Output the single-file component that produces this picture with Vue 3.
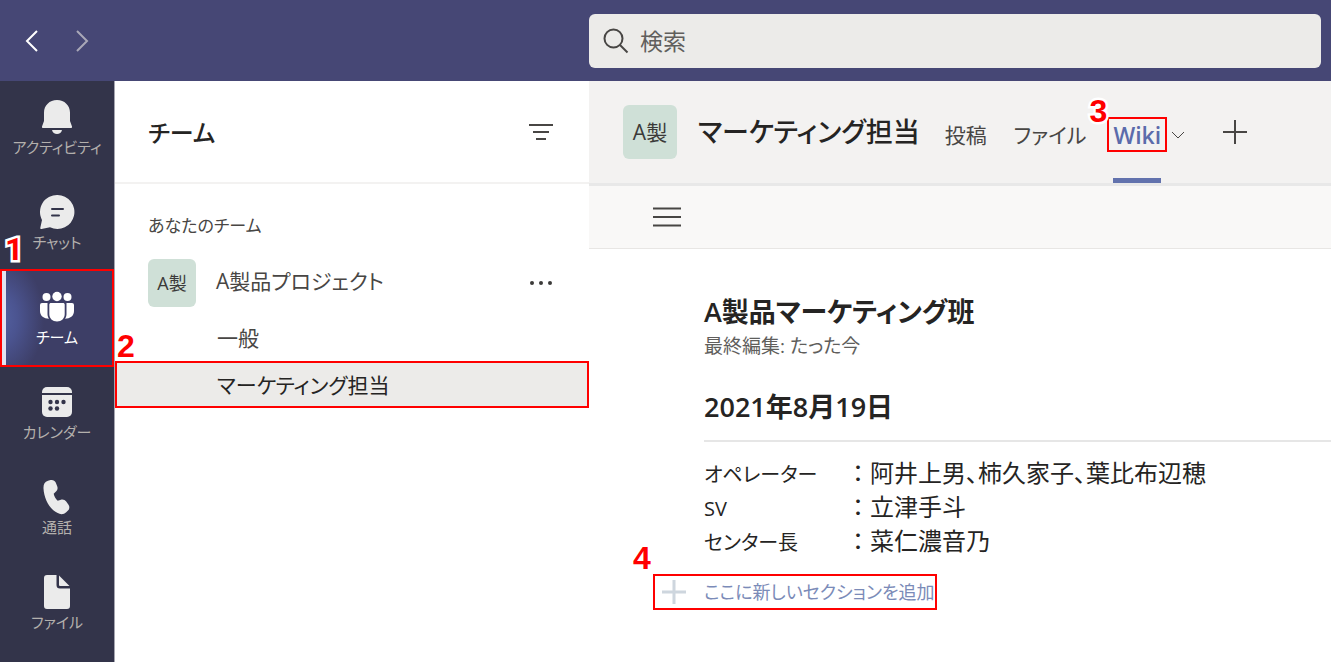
<script setup>
import { ref } from 'vue'

const query = ref('')

const railItems = [
  { id: 'activity', label: 'アクティビティ' },
  { id: 'chat', label: 'チャット' },
  { id: 'teams', label: 'チーム', active: true },
  { id: 'calendar', label: 'カレンダー' },
  { id: 'calls', label: '通話' },
  { id: 'files', label: 'ファイル' },
]

const members = [
  { role: 'オペレーター', names: '阿井上男、柿久家子、葉比布辺穂' },
  { role: 'SV', names: '立津手斗' },
  { role: 'センター長', names: '菜仁濃音乃' },
]
</script>

<template>
  <div class="app">
    <header class="topbar">
      <nav class="history" aria-label="履歴">
        <button class="history-btn" type="button" aria-label="戻る">
          <svg width="14" height="22" viewBox="0 0 14 22"><path d="M12 1 2 11l10 10" /></svg>
        </button>
        <button class="history-btn dim" type="button" aria-label="進む">
          <svg width="14" height="22" viewBox="0 0 14 22"><path d="M2 1l10 10L2 21" /></svg>
        </button>
      </nav>
      <label class="search">
        <svg width="26" height="26" viewBox="0 0 26 26" aria-hidden="true">
          <circle cx="10.500" cy="10.500" r="9" />
          <path d="M17 17l7.500 7.500" />
        </svg>
        <input v-model="query" type="search" placeholder="検索" aria-label="検索" />
      </label>
    </header>

    <div class="body">
      <nav class="rail" aria-label="アプリ">
        <a
          v-for="item in railItems"
          :key="item.id"
          href="#"
          class="rail-item"
          :class="{ active: item.active }"
        >
          <svg class="rail-icon" width="36" height="36" viewBox="0 0 36 36" aria-hidden="true">
            <template v-if="item.id === 'activity'">
              <path d="M18 1C10.500 1 5 6.500 5 13.500V22l-2 5.500c-.2.800.2 1.500 1 1.500h28c.8 0 1.200-.700 1-1.500L31 22v-8.500C31 6.500 25.500 1 18 1z" />
              <path d="M13 31h10c-.5 2.500-2.500 4-5 4s-4.500-1.500-5-4z" />
            </template>
            <template v-else-if="item.id === 'chat'">
              <path d="M18.500 1a17 17 0 1 1-7.500 32.300L2.500 35c-.8.200-1.400-.5-1.200-1.300L3 26A17 17 0 0 1 18.500 1z" />
              <path class="cut" d="M13 15h11M13 21.500h7" />
            </template>
            <template v-else-if="item.id === 'teams'">
              <circle cx="7.500" cy="8" r="4" />
              <circle cx="28.500" cy="8" r="4" />
              <circle cx="18" cy="7.500" r="4.700" />
              <path d="M3 14h5.500v11c0 1.800.5 3.300 1.500 4.700C5 29.700 1 27 1 22v-6a2 2 0 0 1 2-2z" />
              <path d="M33 14h-5.500v11c0 1.800-.5 3.300-1.500 4.700 5 0 9-2.700 9-7.700v-6a2 2 0 0 0-2-2z" />
              <path d="M12 14h12c1 0 1.700.7 1.700 1.700V25c0 4.500-3.200 7.500-7.700 7.500S10.300 29.500 10.300 25v-9.300c0-1 .7-1.700 1.700-1.700z" />
            </template>
            <template v-else-if="item.id === 'calendar'">
              <path d="M8 3h20a5 5 0 0 1 5 5v1H3V8a5 5 0 0 1 5-5z" />
              <path d="M3 11h30v17a5 5 0 0 1-5 5H8a5 5 0 0 1-5-5z" />
              <g class="dots">
                <circle cx="11.500" cy="18" r="2.200" />
                <circle cx="18" cy="18" r="2.200" />
                <circle cx="24.500" cy="18" r="2.200" />
                <circle cx="11.500" cy="24.500" r="2.200" />
                <circle cx="18" cy="24.500" r="2.200" />
              </g>
            </template>
            <template v-else-if="item.id === 'calls'">
              <path d="M9 1.800l2.500-.7c2.200-.6 4.300.4 5.200 2.500l1.500 3.600c.8 1.900.3 4-1.200 5.400l-2.300 2.200c.3 2.400 2 5.300 4 6.900l3.200-.9c2-.6 4.100.1 5.300 1.800l2.300 3.100c1.300 1.800 1.100 4.300-.5 5.900l-1.800 1.700c-1.800 1.700-4.400 2.300-6.700 1.500C11.500 31.800 5 20.500 4.500 9.500 4.300 5.500 5.500 2.800 9 1.800z" />
            </template>
            <template v-else>
              <path d="M8 1h9.500v10a3.500 3.500 0 0 0 3.500 3.500h10V32a3 3 0 0 1-3 3H8a3 3 0 0 1-3-3V4a3 3 0 0 1 3-3z" />
              <path d="M20 1.500L30.500 12H21a1 1 0 0 1-1-1z" />
            </template>
          </svg>
          <span class="rail-label">{{ item.label }}</span>
          <span v-if="item.active" class="mark mark-rail" aria-hidden="true"></span>
          <span v-if="item.active" class="step step-1">1</span>
        </a>
      </nav>

      <aside class="teams">
        <div class="teams-head">
          <h1>チーム</h1>
          <button class="icon-btn" type="button" aria-label="フィルター">
            <svg width="24" height="18" viewBox="0 0 24 18"><path d="M0 2h24M4 9h16M7 16h10" /></svg>
          </button>
        </div>
        <p class="group">あなたのチーム</p>
        <div class="team-row">
          <span class="avatar small">A製</span>
          <span class="team-name">A製品プロジェクト</span>
          <button class="icon-btn" type="button" aria-label="その他のオプション">
            <svg class="more" width="24" height="6" viewBox="0 0 24 6">
              <circle cx="3" cy="3" r="2" /><circle cx="12" cy="3" r="2" /><circle cx="21" cy="3" r="2" />
            </svg>
          </button>
        </div>
        <ul class="channels">
          <li><a href="#" class="channel">一般</a></li>
          <li>
            <a href="#" class="channel selected">
              マーケティング担当
              <span class="step step-2">2</span>
            </a>
          </li>
        </ul>
      </aside>

      <main class="main">
        <div class="channel-head">
          <span class="avatar">A製</span>
          <h2>マーケティング担当</h2>
          <div class="tabs">
            <button class="tab" type="button">投稿</button>
            <button class="tab" type="button">ファイル</button>
            <button class="tab current" type="button">
              Wiki
              <span class="mark mark-tab" aria-hidden="true"></span>
              <span class="step step-3">3</span>
            </button>
            <button class="icon-btn chevron" type="button" aria-label="タブのメニュー">
              <svg width="14" height="10" viewBox="0 0 14 10"><path d="M1 2l6 6 6-6" /></svg>
            </button>
            <button class="icon-btn add-tab" type="button" aria-label="タブを追加">
              <svg width="24" height="24" viewBox="0 0 24 24"><path d="M12 0v24M0 12h24" /></svg>
            </button>
          </div>
        </div>
        <div class="toolbar">
          <button class="icon-btn" type="button" aria-label="目次">
            <svg width="28" height="20" viewBox="0 0 28 20"><path d="M0 1.500h28M0 10h28M0 18.500h28" /></svg>
          </button>
        </div>
        <article class="page">
          <h3>A製品マーケティング班</h3>
          <p class="edited">最終編集: たった今</p>
          <h4>2021年8月19日</h4>
          <dl class="members">
            <template v-for="m in members" :key="m.role">
              <dt>{{ m.role }}</dt>
              <dd><span class="colon">：</span>{{ m.names }}</dd>
            </template>
          </dl>
          <button class="add-section" type="button">
            <svg width="26" height="26" viewBox="0 0 26 26" aria-hidden="true"><path d="M13 1v24M1 13h24" /></svg>
            <span>ここに新しいセクションを追加</span>
            <span class="step step-4">4</span>
          </button>
        </article>
      </main>
    </div>
  </div>
</template>

<style>
body {
  background: #ffffff;
}
</style>

<style scoped>
.app {
  min-height: 100vh;
  display: flex;
  flex-direction: column;
  font-family: "Open Sans", "Noto Sans CJK JP", sans-serif;
  font-feature-settings: "palt";
  font-size: 23px;
  line-height: 34px;
  color: #252423;
  overflow: hidden;
}
h1, h2, h3, h4, p, ul, dl, dd {
  margin: 0;
  padding: 0;
}
h1, h2 {
  font-weight: 500;
}
h3, h4 {
  font-weight: 600;
}
button, input {
  font: inherit;
  font-feature-settings: inherit;
  color: inherit;
  border: 0;
  padding: 0;
  background: none;
}
a {
  color: inherit;
  text-decoration: none;
}
svg {
  display: block;
  flex: none;
  fill: none;
  stroke: #484644;
  stroke-width: 2;
}

.topbar {
  height: 81px;
  display: grid;
  grid-template-columns: 589px 1fr;
  align-items: center;
  background: #464775;
}
.history {
  display: flex;
  gap: 36px;
  padding-left: 25px;
}
.history svg {
  stroke: #ffffff;
}
.history .dim svg {
  stroke: #a9a8b8;
}
.search {
  display: flex;
  align-items: center;
  gap: 11px;
  height: 54px;
  margin-right: 10px;
  padding: 0 14px;
  border-radius: 6px;
  background: #ecebe9;
}
.search input {
  flex: 1;
  min-width: 0;
  outline: 0;
  appearance: none;
}
.search input::placeholder {
  color: #605e5c;
  opacity: 1;
}

.body {
  flex: 1;
  display: grid;
  grid-template-columns: 115px 474px 1fr;
}

.rail {
  background: #33344a;
  color: #b3b0ad;
  border-right: 1px solid #a5a5b0;
  position: relative;
  z-index: 1;
}
.rail-item {
  position: relative;
  display: flex;
  flex-direction: column;
  align-items: center;
  height: 95px;
  padding-top: 18px;
  box-sizing: border-box;
}
.rail-icon {
  fill: #ebebeb;
  stroke: none;
}
.rail-icon .cut {
  stroke: #33344a;
  stroke-width: 2;
  stroke-linecap: round;
}
.rail-icon .dots {
  fill: #33344a;
}
.rail-label {
  font-size: 15px;
  line-height: 24px;
  white-space: nowrap;
}
.rail-item.active {
  color: #ffffff;
  background: radial-gradient(ellipse 44px 64px at 0 50%, #5360a0, #4b5490 40%, #3d3e66);
}
.rail-item.active .rail-icon {
  fill: #ffffff;
}
.rail-item.active::before {
  content: "";
  position: absolute;
  left: 2px;
  top: 0;
  bottom: 0;
  width: 4px;
  background: #e2e2f0;
}

.teams {
  background: #ffffff;
  min-width: 0;
}
.teams-head {
  display: flex;
  align-items: center;
  justify-content: space-between;
  height: 103px;
  padding: 0 36px 0 33px;
  border-bottom: 2px solid #f3f2f1;
  box-sizing: border-box;
}
.teams-head h1 {
  padding-top: 3px;
  font-size: 24px;
}
.group {
  padding: 25px 33px 0;
  font-size: 17px;
  color: #484644;
}
.team-row {
  display: flex;
  align-items: center;
  height: 48px;
  margin-top: 16px;
  padding: 0 36px 0 33px;
}
.team-name {
  flex: 1;
  padding: 0 0 4px 20px;
  font-size: 21px;
  color: #484644;
}
.more {
  fill: #3b3a39;
  stroke: none;
}
.avatar {
  display: flex;
  align-items: center;
  justify-content: center;
  flex: none;
  width: 54px;
  height: 54px;
  border-radius: 6px;
  background: #cfe0d7;
  color: #3b3a39;
  font-size: 21px;
}
.avatar.small {
  width: 48px;
  height: 48px;
  font-size: 18px;
}
.channels {
  list-style: none;
  padding-top: 7px;
  font-size: 21px;
  color: #484644;
}
.channel {
  position: relative;
  display: flex;
  align-items: center;
  height: 47px;
  padding-left: 102px;
}
.channel.selected {
  box-sizing: border-box;
  padding-left: 100px;
  color: #252423;
  background: #ecebe9;
  border: 2px solid #ff0000;
}

.main {
  background: #ffffff;
  min-width: 0;
}
.channel-head {
  display: flex;
  align-items: center;
  height: 102px;
  padding-left: 34px;
  background: #f3f2f1;
  white-space: nowrap;
}
.channel-head h2 {
  padding-left: 21px;
  font-size: 27px;
}
.tabs {
  display: flex;
  align-items: center;
  height: 102px;
  padding-left: 25px;
  color: #484644;
}
.tab {
  position: relative;
  height: 102px;
  padding-top: 6px;
  margin-right: 27px;
  font-size: 21px;
}
.tab.current {
  margin-right: 10px;
  font-size: 23px;
  color: #5b6bab;
  font-weight: 600;
}
.tab.current::after {
  content: "";
  position: absolute;
  left: 0;
  right: 0;
  bottom: 0;
  height: 5px;
  background: #6272ad;
}
.chevron {
  padding-top: 5px;
}
.chevron svg {
  stroke-width: 1;
}
.add-tab {
  margin-left: 38px;
}
.toolbar {
  display: flex;
  align-items: center;
  height: 66px;
  padding-left: 64px;
  box-sizing: border-box;
  background: #f9f8f7;
  border-top: 3px solid #e8e8e8;
  border-bottom: 1px solid #e8e6e4;
}
.page {
  padding: 44px 0 24px 115px;
}
.page h3 {
  font-size: 27px;
  line-height: 38px;
}
.edited {
  font-size: 19px;
  line-height: 30px;
  color: #605e5c;
}
.page h4 {
  margin-top: 13px;
  font-size: 27px;
  line-height: 66px;
  border-bottom: 2px solid #e6e6e6;
}
.members {
  display: grid;
  grid-template-columns: 142px 1fr;
  grid-auto-rows: 34px;
  align-items: baseline;
  padding-top: 14px;
}
.members dt {
  font-size: 20px;
}
.members dd {
  font-size: 24px;
}
.colon {
  font-family: "Noto Sans CJK JP", sans-serif;
  font-feature-settings: "palt" 0;
  line-height: 24px;
}
.add-section {
  position: relative;
  display: flex;
  align-items: center;
  gap: 17px;
  height: 36px;
  margin: 16px 0 0 -51px;
  padding: 0 0 0 6px;
  border: 2px solid #ff0000;
  font-size: 18px;
  color: #7b8bb8;
}
.add-section svg {
  stroke: #ced6de;
  stroke-width: 3;
}

.mark {
  position: absolute;
  border: 2px solid #ff0000;
  pointer-events: none;
}
.mark-rail {
  left: 0;
  right: 0;
  top: -2px;
  bottom: -1px;
}
.mark-tab {
  left: -6px;
  right: -6px;
  top: 36px;
  height: 31px;
}
.step {
  position: absolute;
  font-family: "Liberation Sans", sans-serif;
  font-weight: 700;
  font-size: 32px;
  line-height: 32px;
  color: #ff0000;
  -webkit-text-stroke: 5px #ffffff;
  paint-order: stroke fill;
  pointer-events: none;
}
.step-1 {
  left: 5px;
  top: -38px;
  font-family: Roboto, "Liberation Sans", sans-serif;
}
.step-2 {
  left: 0;
  top: -33px;
}
.step-3 {
  left: -24px;
  top: 14px;
}
.step-4 {
  left: -22px;
  top: -34px;
}
</style>
